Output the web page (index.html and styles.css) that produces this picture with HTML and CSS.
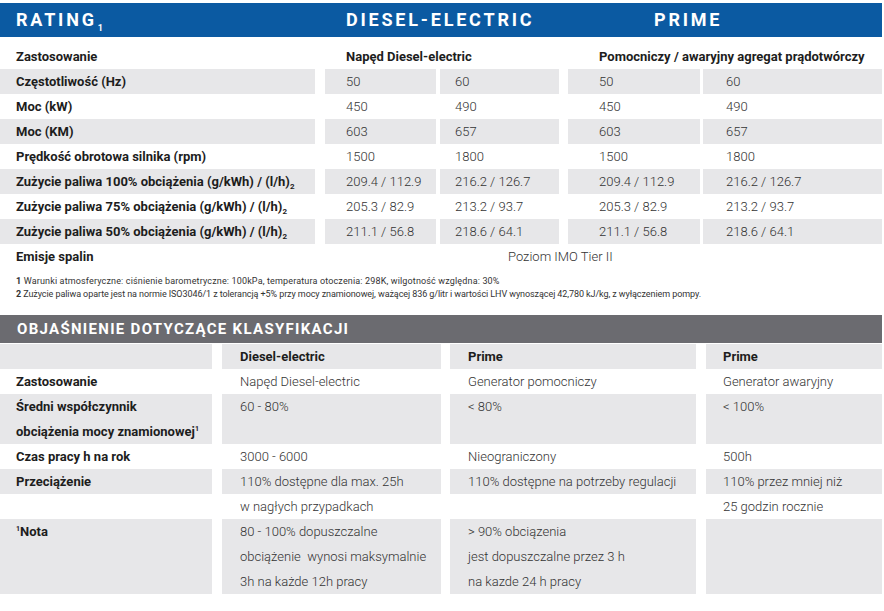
FILE: index.html
```html
<!DOCTYPE html>
<html lang="pl">
<head>
<meta charset="utf-8">
<link rel="stylesheet" href="styles.css">
</head>
<body>
<div class="page">
  <div class="bar bar-blue">
    <div class="bh bh-label">RATING<sub>1</sub></div>
    <div class="bh bh-de">DIESEL-ELECTRIC</div>
    <div class="bh bh-prime">PRIME</div>
  </div>

  <div class="t1">
    <div class="row">
      <div class="c0 b">Zastosowanie</div>
      <div class="c1 b span2">Napęd Diesel-electric</div>
      <div class="c3 b span2">Pomocniczy / awaryjny agregat prądotwórczy</div>
    </div>
    <div class="row g">
      <div class="c0 b">Częstotliwość (Hz)</div>
      <div class="c1">50</div><div class="c2">60</div><div class="c3">50</div><div class="c4">60</div>
    </div>
    <div class="row">
      <div class="c0 b">Moc (kW)</div>
      <div class="c1">450</div><div class="c2">490</div><div class="c3">450</div><div class="c4">490</div>
    </div>
    <div class="row g">
      <div class="c0 b">Moc (KM)</div>
      <div class="c1">603</div><div class="c2">657</div><div class="c3">603</div><div class="c4">657</div>
    </div>
    <div class="row">
      <div class="c0 b">Prędkość obrotowa silnika (rpm)</div>
      <div class="c1">1500</div><div class="c2">1800</div><div class="c3">1500</div><div class="c4">1800</div>
    </div>
    <div class="row g">
      <div class="c0 b">Zużycie paliwa 100% obciążenia (g/kWh) / (l/h)<sub>2</sub></div>
      <div class="c1">209.4 / 112.9</div><div class="c2">216.2 / 126.7</div><div class="c3">209.4 / 112.9</div><div class="c4">216.2 / 126.7</div>
    </div>
    <div class="row">
      <div class="c0 b">Zużycie paliwa 75% obciążenia (g/kWh) / (l/h)<sub>2</sub></div>
      <div class="c1">205.3 / 82.9</div><div class="c2">213.2 / 93.7</div><div class="c3">205.3 / 82.9</div><div class="c4">213.2 / 93.7</div>
    </div>
    <div class="row g">
      <div class="c0 b">Zużycie paliwa 50% obciążenia (g/kWh) / (l/h)<sub>2</sub></div>
      <div class="c1">211.1 / 56.8</div><div class="c2">218.6 / 64.1</div><div class="c3">211.1 / 56.8</div><div class="c4">218.6 / 64.1</div>
    </div>
    <div class="row">
      <div class="c0 b">Emisje spalin</div>
      <div class="c1 span4 imo">Poziom IMO Tier II</div>
    </div>
  </div>

  <div class="notes">
    <p class="n1"><b>1</b> Warunki atmosferyczne: ciśnienie barometryczne: 100kPa, temperatura otoczenia: 298K, wilgotność względna: 30%</p>
    <p class="n2"><b>2</b> Zużycie paliwa oparte jest na normie ISO3046/1 z tolerancją +5% przy mocy znamionowej, ważącej 836 g/litr i wartości LHV wynoszącej 42,780 kJ/kg, z wyłączeniem pompy.</p>
  </div>

  <div class="bar bar-gray">
    <div class="bh2">OBJAŚNIENIE DOTYCZĄCE KLASYFIKACJI</div>
  </div>

  <div class="t2">
    <div class="row g">
      <div class="d0"></div>
      <div class="d1 b">Diesel-electric</div>
      <div class="d2 b">Prime</div>
      <div class="d3 b">Prime</div>
    </div>
    <div class="row">
      <div class="d0 b">Zastosowanie</div>
      <div class="d1">Napęd Diesel-electric</div>
      <div class="d2">Generator pomocniczy</div>
      <div class="d3">Generator awaryjny</div>
    </div>
    <div class="row g">
      <div class="d0 b">Średni współczynnik<br>obciążenia mocy znamionowej<sup>1</sup></div>
      <div class="d1">60 - 80%</div>
      <div class="d2">&lt; 80%</div>
      <div class="d3">&lt; 100%</div>
    </div>
    <div class="row">
      <div class="d0 b">Czas pracy h na rok</div>
      <div class="d1">3000 - 6000</div>
      <div class="d2">Nieograniczony</div>
      <div class="d3">500h</div>
    </div>
    <div class="row">
      <div class="d0 b gc">Przeciążenie</div>
      <div class="d1 split"><span class="gl">110% dostępne dla max. 25h</span><span>w nagłych przypadkach</span></div>
      <div class="d2 split"><span class="gl">110% dostępne na potrzeby regulacji</span><span></span></div>
      <div class="d3 split"><span class="gl">110% przez mniej niż</span><span>25 godzin rocznie</span></div>
    </div>
    <div class="row g">
      <div class="d0 b"><sup>1</sup>Nota</div>
      <div class="d1">80 - 100% dopuszczalne<br>obciążenie&nbsp; wynosi maksymalnie<br>3h na każde 12h pracy</div>
      <div class="d2">&gt; 90% obciązenia<br>jest dopuszczalne przez 3 h<br>na kazde 24 h pracy</div>
      <div class="d3"></div>
    </div>
  </div>
</div>
</body>
</html>
```

FILE: styles.css
```css
* { box-sizing: border-box; }
html, body { margin: 0; padding: 0; background: #fff; }
body {
  font-family: Roboto, "Liberation Sans", Arial, sans-serif;
  font-size: 13px;
  color: #333;
}
.page { width: 882px; padding-top: 3px; }

.bar { display: flex; align-items: center; color: #fff; font-weight: 700; }
.bar-blue { background: #0b5aa2; height: 34px; }
.bar-gray { background: #6b6b70; height: 28px; margin-top: 14px; }

.bh { font-size: 18px; letter-spacing: 2.8px; line-height: 20px; }
.bh sub { font-size: 9px; letter-spacing: 0; vertical-align: -5px; line-height: 0; margin-left: 1px; }
.bh-label { width: 346px; padding-left: 16px; }
.bh-de { width: 308px; }
.bh2 { font-size: 15px; letter-spacing: 1.3px; padding-left: 17px; }

.b { font-weight: 700; color: #1d1d1d; }

/* Table 1 */
.t1 { margin-top: 7px; }
.t1 .row {
  display: grid;
  grid-template-columns: 315px 121px 123px 141px 182px;
  height: 25px;
}
.t1 .row > div { line-height: 25px; height: 25px; font-weight: 300; white-space: nowrap; }
.t1 .row > div.b { font-weight: 700; }
.t1 .g > div { background: #e7e7e9; }
.c0 { padding-left: 16px; }
.c1 { margin-left: 10px; padding-left: 21px; }
.c2 { margin-left: 4px; padding-left: 15px; }
.c3 { margin-left: 9px; padding-left: 31px; }
.c4 { margin-left: 3px; padding-left: 23px; }
.span2 { grid-column: span 2; }
.span4 { grid-column: span 4; }
.imo { padding-left: 183px; }
sub { font-size: 8px; vertical-align: -3px; line-height: 0; }
sup { font-size: 7px; vertical-align: 5px; line-height: 0; }

.notes { padding: 6px 0 0 16px; font-size: 9px; line-height: 13px; color: #333; }
.notes p { margin: 0; white-space: nowrap; }
.notes .n1 { letter-spacing: 0.15px; }
.notes .n2 { letter-spacing: -0.08px; }
.notes b { font-weight: 700; }

/* Table 2 */
.t2 { margin-top: 1px; }
.t2 .row {
  display: grid;
  grid-template-columns: 212px 229px 255px 186px;
}
.t2 .row > div { line-height: 25px; font-weight: 300; }
.t2 .row > div.b { font-weight: 700; }
.t2 .g > div { background: #e7e7e9; }
.t2 .row > div.gc { background: #e7e7e9; height: 25px; }
.d0 { padding-left: 16px; }
.d1 { margin-left: 10px; padding-left: 18px; }
.d2 { margin-left: 9px; padding-left: 18px; }
.d3 { margin-left: 10px; padding-left: 17px; }
.t2 .split { padding-left: 0; display: flex; flex-direction: column; }
.t2 .split span { display: block; height: 25px; padding-left: 18px; }
.t2 .d3.split span { padding-left: 17px; }
.t2 .split .gl { background: #e7e7e9; }
```
